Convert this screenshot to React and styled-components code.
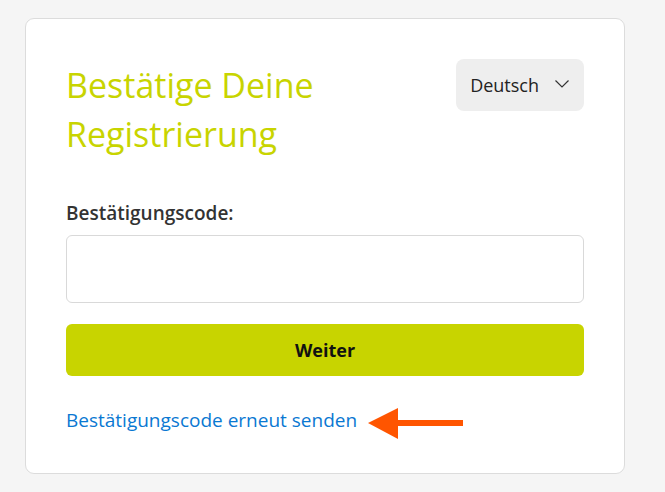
import React from 'react';
import styled, { createGlobalStyle } from 'styled-components';

const GlobalStyle = createGlobalStyle`
    body {
        margin: 0;
        background: #f5f5f5;
        font-family: "Open Sans", "Noto Sans", sans-serif;
    }
`

const Page = () => {
    return (
        <Wrapper>
            <GlobalStyle />
            <Card>
                <Header>
                    <Title>Bestätige Deine Registrierung</Title>
                    <LangSelect type='button'>
                        Deutsch
                        <svg width='14' height='8' viewBox='0 0 14 8' fill='none'>
                            <path d='M0.5 0.5 L7 7 L13.5 0.5' stroke='#333' strokeWidth='1.2' />
                        </svg>
                    </LangSelect>
                </Header>
                <Label htmlFor='code'>Bestätigungscode:</Label>
                <CodeInput id='code' type='text' />
                <SubmitButton type='button'>Weiter</SubmitButton>
                <LinkRow>
                    <ResendLink href='#'>Bestätigungscode erneut senden</ResendLink>
                    <svg width='96' height='32' viewBox='0 0 96 32'>
                        <polygon points='0,15 30,0 30,31' fill='#ff5500' />
                        <rect x='29' y='12' width='66' height='6' fill='#ff5500' />
                    </svg>
                </LinkRow>
            </Card>
        </Wrapper>
    )
}

const Wrapper = styled.div`
    padding: 18px 0 0 25px;
`

const Card = styled.div`
    width: 600px;
    box-sizing: border-box;
    background: #fff;
    border: 1px solid #dcdcdc;
    border-radius: 9px;
    padding: 40px 40px 33px;
    display: flex;
    flex-direction: column;
`

const Header = styled.div`
    display: flex;
    justify-content: space-between;
    align-items: flex-start;
    margin-bottom: 42px;
`

const Title = styled.h1`
    margin: 0;
    padding-top: 2px;
    width: 320px;
    font-size: 34px;
    line-height: 49px;
    font-weight: 400;
    color: #c8d400;
`

const LangSelect = styled.button`
    display: flex;
    align-items: center;
    gap: 16px;
    height: 52px;
    padding: 0 15px 0 14px;
    border: none;
    border-radius: 8px;
    background: #eeeeee;
    font-family: inherit;
    font-size: 18px;
    color: #222;
    cursor: pointer;

    svg {
        margin-top: -3px;
    }
`

const Label = styled.label`
    font-size: 19px;
    line-height: 24px;
    font-weight: 600;
    color: #333;
    margin-bottom: 10px;
`

const CodeInput = styled.input`
    height: 68px;
    box-sizing: border-box;
    border: 1px solid #d9d9d9;
    border-radius: 6px;
    padding: 0 14px;
    font-size: 18px;
    margin-bottom: 21px;
`

const SubmitButton = styled.button`
    height: 52px;
    border: none;
    border-radius: 6px;
    background: #c8d400;
    font-family: inherit;
    font-size: 18px;
    font-weight: 700;
    color: #111;
    cursor: pointer;
    margin-bottom: 31px;
`

const LinkRow = styled.div`
    display: flex;
    align-items: flex-start;
    gap: 11px;

    svg {
        margin-top: 1px;
    }
`

const ResendLink = styled.a`
    font-size: 19px;
    line-height: 27px;
    color: #0a78d2;
    text-decoration: none;
`

export default Page;
